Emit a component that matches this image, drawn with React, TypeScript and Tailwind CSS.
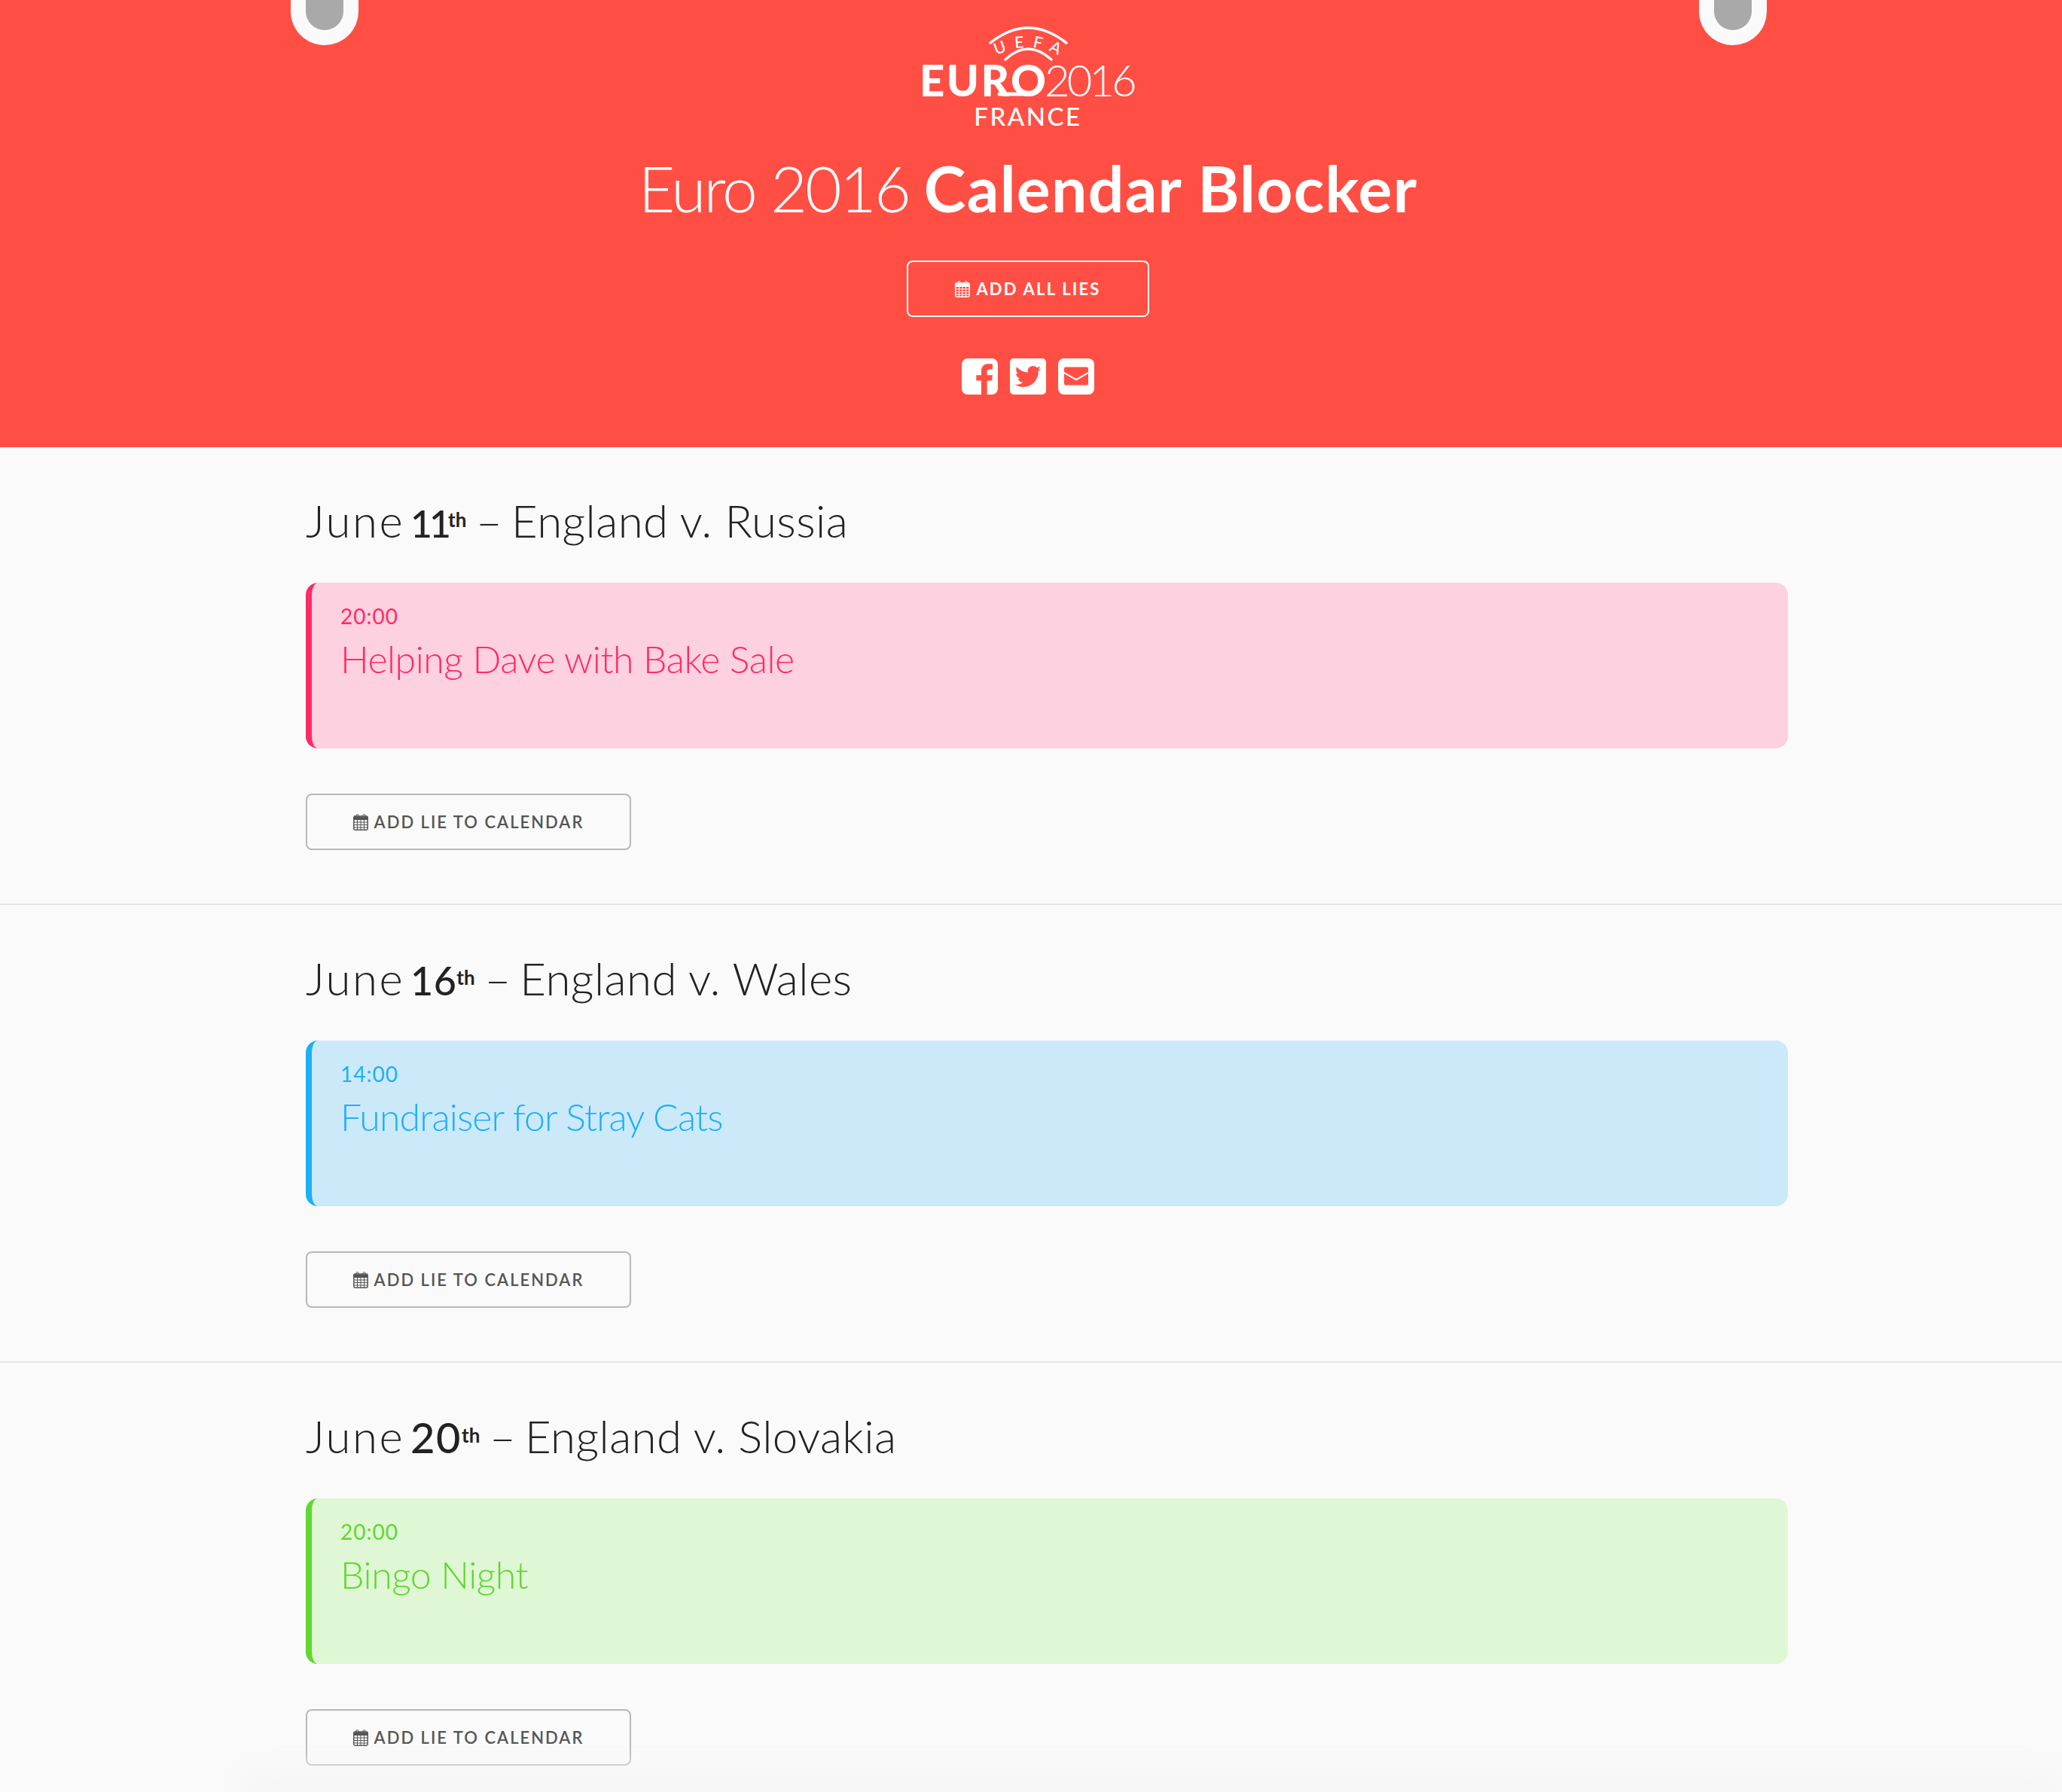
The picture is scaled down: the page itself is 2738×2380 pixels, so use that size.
import React from "react";
import { FaTwitterSquare } from "react-icons/fa";

function Cal({ className }: { className: string }) {
  return (
    <svg viewBox="0 0 20 22" className={className} fill="none" stroke="currentColor">
      <rect x="0.8" y="3" width="18.4" height="18.2" rx="1.6" strokeWidth="1.5" />
      <path d="M1 3.500h18V8H1z" fill="currentColor" stroke="none" />
      <path d="M1 11h18M1 14.500h18M1 18h18M5.500 8v13M10 8v13M14.500 8v13" strokeWidth="1" />
      <rect x="4" y="0.6" width="3" height="4.500" rx="1.500" strokeWidth="1" />
      <rect x="13" y="0.6" width="3" height="4.500" rx="1.500" strokeWidth="1" />
    </svg>
  );
}

function Facebook() {
  return (
    <svg viewBox="0 0 48 48" className="h-[48px] w-[48px]" fill="white">
      <path
        fillRule="evenodd"
        d="M8 0H40A8 8 0 0 1 48 8V40A8 8 0 0 1 40 48H33.700V29.600H40L41 22.300H33.700V17.500C33.700 15.500 34.500 14.500 37 14.500H41V7.500C39 7.300 37.500 7.300 35.500 7.300C30 7.300 26 10.500 26 17V22.300H19.300V29.600H26V48H8A8 8 0 0 1 0 40V8A8 8 0 0 1 8 0Z"
      />
    </svg>
  );
}

function Envelope() {
  return (
    <svg viewBox="0 0 48 48" className="h-[48px] w-[48px]">
      <rect width="48" height="48" rx="8" fill="white" />
      <path d="M10 11.500H38A2 2 0 0 1 40 13.500V18L24 27 8 18V13.500A2 2 0 0 1 10 11.500Z" fill="#ff4f44" />
      <path d="M8 20.300L24 29.500 40 20.300V33.500A2 2 0 0 1 38 35.500H10A2 2 0 0 1 8 33.500Z" fill="#ff4f44" />
    </svg>
  );
}

function Logo() {
  return (
    <svg viewBox="0 0 288 140" className="h-[140px] w-[288px] overflow-visible" fill="white">
      <defs>
        <path id="uefaArc" d="M100 41 Q144 17 188 41" />
      </defs>
      <path d="M94 23 Q144 -17 195 23" fill="none" stroke="white" strokeWidth="3.500" strokeLinecap="round" />
      <path d="M114 45 Q144 17 175 45" fill="none" stroke="white" strokeWidth="3.500" strokeLinecap="round" />
      <text fontFamily="Lato, sans-serif" fontSize="21" fontWeight="500" letterSpacing="11" textAnchor="middle">
        <textPath href="#uefaArc" startOffset="55%">UEFA</textPath>
      </text>
      <text x="0" y="94" fontFamily="Lato, sans-serif" fontWeight="900" fontSize="58" letterSpacing="2.500">EURO</text>
      <path d="M106 91 H149" fill="none" stroke="white" strokeWidth="5" strokeLinecap="round" />
      <text x="166" y="94" fontFamily="Lato, sans-serif" fontWeight="300" fontSize="58" letterSpacing="-4">2016</text>
      <text x="144" y="133" fontFamily="Lato, sans-serif" fontWeight="500" fontSize="33" letterSpacing="2.500" textAnchor="middle">FRANCE</text>
    </svg>
  );
}

function Section({ suffix, digits, match, time, title, titleTracking, colors, border }: {
  suffix: string; digits: string; match: string; time: string; title: string; titleTracking: string; colors: string; border: boolean;
}) {
  return (
    <section className={`h-[608px] pl-[406px] pr-[364px] pt-[57px] ${border ? "border-b-2 border-[#e4e4e4]" : ""}`}>
      <h2 className="text-[60px] leading-[80px] font-light tracking-[0.4px] text-[#222222]">
        <span className="tracking-[2.500px]">June</span>{" "}
        <span className={`-ml-[9px] leading-none font-medium ${digits}`}>{suffix}</span>
        <span className="relative bottom-[14px] text-[26px] leading-none font-bold tracking-normal">th</span>
        <span className="-ml-[4px]"> – </span>
        <span className="-ml-[5px]">{match}</span>
      </h2>
      <div className={`mt-[43px] h-[220px] rounded-2xl border-l-[8px] pl-[38px] pt-[25px] ${colors}`}>
        <div className="text-[28px] leading-[38px] tracking-[1px]">{time}</div>
        <div className={`mt-[5px] text-[50px] leading-[66px] font-light ${titleTracking}`}>{title}</div>
      </div>
      <button className="mt-[60px] flex h-[75px] w-[432px] items-center justify-center gap-[8px] rounded-lg border-2 border-[#b8b8b8] text-[22px] font-semibold tracking-[2px] text-[#555555]">
        <Cal className="h-[22px] w-[20px]" />
        ADD LIE TO CALENDAR
      </button>
    </section>
  );
}

export default function App() {
  return (
    <div className="relative h-[2380px] overflow-hidden bg-[#fafafa] font-['Lato',sans-serif]">
      <header className="relative flex h-[594px] flex-col items-center bg-[#ff4f44] pr-[8px] pt-[34px] text-white">
        <div className="absolute left-[386px] top-0 h-[60px] w-[90px] rounded-b-[45px] bg-[#fafafa] pl-[20px]">
          <div className="h-[40px] w-[50px] rounded-b-[25px] bg-[#a9a9a9]" />
        </div>
        <div className="absolute right-[392px] top-0 h-[60px] w-[90px] rounded-b-[45px] bg-[#fafafa] pl-[20px]">
          <div className="h-[40px] w-[50px] rounded-b-[25px] bg-[#a9a9a9]" />
        </div>
        <Logo />
        <h1 className="mt-[26px] text-[84px] leading-[100px] font-light tracking-[-2.8px]">
          Euro 2016 <span className="font-bold tracking-[1.3px]">Calendar Blocker</span>
        </h1>
        <button className="mt-[46px] flex h-[75px] w-[322px] items-center justify-center gap-[8px] rounded-lg border-2 border-white text-[22px] font-bold tracking-[2.2px]">
          <Cal className="h-[22px] w-[20px]" />
          ADD ALL LIES
        </button>
        <div className="mt-[55px] flex gap-[16px]">
          <Facebook />
          <FaTwitterSquare className="-my-[4px] h-[56px] w-[48px]" />
          <Envelope />
        </div>
      </header>
      <Section suffix="11" digits="text-[50px] tracking-[-4px]" match="England v. Russia" time="20:00" title="Helping Dave with Bake Sale" titleTracking="tracking-[-0.5px]" colors="border-[#ff2a68] bg-[#fdd1df] text-[#ff2a68]" border />
      <Section suffix="16" digits="text-[52px] tracking-[0.500px]" match="England v. Wales" time="14:00" title="Fundraiser for Stray Cats" titleTracking="tracking-[-0.9px]" colors="border-[#1cb0f6] bg-[#cce9f9] text-[#1cb0f6]" border />
      <Section suffix="20" digits="text-[56px] tracking-[1.500px]" match="England v. Slovakia" time="20:00" title="Bingo Night" titleTracking="tracking-[-0.5px]" colors="border-[#5fd82f] bg-[#e0f7d5] text-[#5fd82f]" border={false} />
      <div className="absolute bottom-[-30px] left-[320px] right-0 h-[60px] bg-[#f6f6f6] blur-[20px]" />
    </div>
  );
}
